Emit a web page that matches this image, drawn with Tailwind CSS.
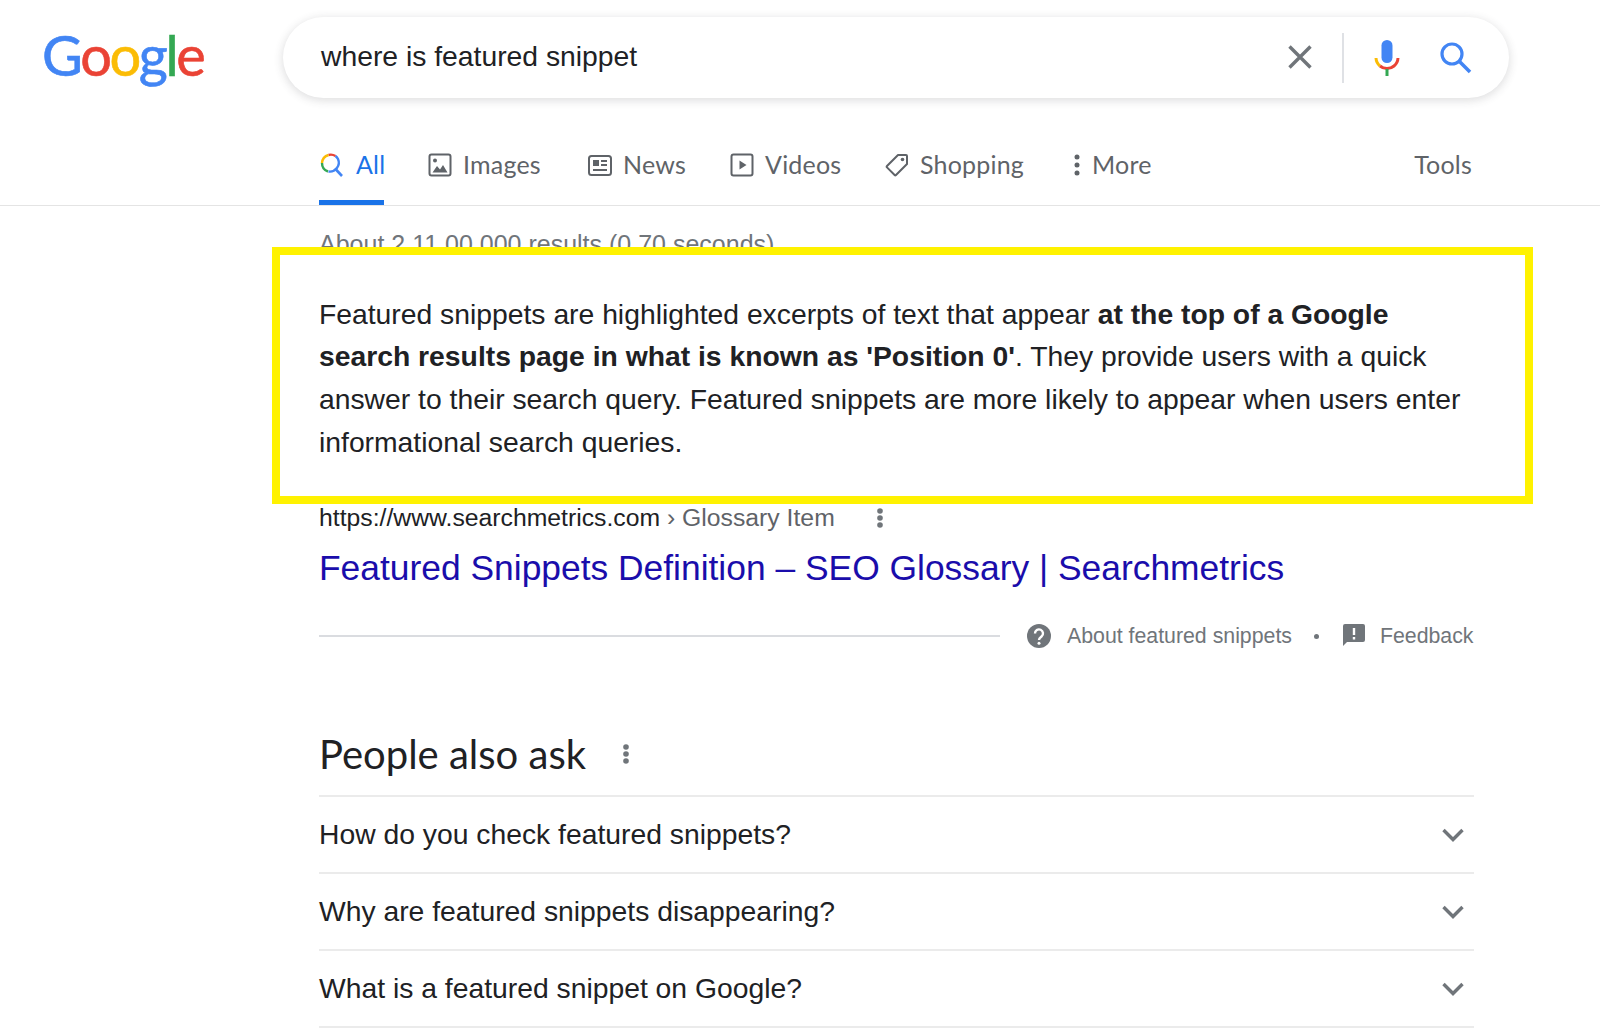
<!DOCTYPE html>
<html lang="en">
<head>
    <meta charset="UTF-8">
    <meta name="viewport" content="width=device-width, initial-scale=1.0">
    <title>where is featured snippet - Google Search</title>
    <script src="https://cdn.jsdelivr.net/npm/@tailwindcss/browser@4"></script>
</head>
<body class="bg-white w-[1600px] h-[1034px] overflow-hidden [font-family:'Liberation_Sans',sans-serif] text-[#202124]">

    <!-- header -->
    <header class="flex items-start h-[132px]">
        <div class="w-[283px] pl-[42px] pt-[17px] text-[56px] leading-[76px] tracking-[-2.400px] [-webkit-text-stroke:0.6px] [font-family:'Lato',sans-serif]">
            <span class="text-[#4285f4]">G</span><span class="text-[#ea4335]">o</span><span class="text-[#fbbc05]">o</span><span class="text-[#4285f4]">g</span><span class="text-[#34a853]">l</span><span class="text-[#ea4335]">e</span>
        </div>
        <div class="mt-[17px] w-[1226px] h-[81px] rounded-[41px] bg-white shadow-[0_2px_8px_1px_rgba(64,60,67,0.16)] flex items-center pl-[38px]">
            <span class="flex-1 mb-[2px] text-[28.300px] text-[#202124]">where is featured snippet</span>
            <svg class="w-[24px] h-[24px] mr-[30px] mb-[2px]" viewBox="0 0 24 24"><path d="M1.500 1.500 22.500 22.500M22.500 1.500 1.500 22.500" stroke="#70757a" stroke-width="3.400" fill="none"/></svg>
            <div class="w-[2px] h-[50px] bg-[#dfe1e5] mr-[30px]"></div>
            <svg class="w-[26px] h-[36px] mr-[40px]" viewBox="0 0 26 36">
                <rect x="7.500" y="0" width="11" height="23" rx="5.500" fill="#4285f4"/>
                <path d="M2 18a11 11 0 0 0 4 8" stroke="#fbbc05" stroke-width="3" fill="none"/>
                <path d="M6 26a11 11 0 0 0 14 0 11 11 0 0 0 4-8" stroke="#ea4335" stroke-width="3" fill="none"/>
                <rect x="11.500" y="29" width="3" height="7" fill="#34a853"/>
            </svg>
            <svg class="w-[32px] h-[32px] mr-[37px]" viewBox="0 0 32 32"><circle cx="12" cy="12" r="10" stroke="#4285f4" stroke-width="3.200" fill="none"/><path d="M19.500 19.500 30 30" stroke="#4285f4" stroke-width="3.600" fill="none"/></svg>
        </div>
    </header>

    <!-- tabs -->
    <nav class="h-[74px] border-b border-[#e4e4e4] pl-[319px] flex items-start text-[25px] tracking-[0.200px] text-[#5f6368] [font-family:'Lato',sans-serif]">
        <div class="flex items-center w-[1153px] h-[73px]">
            <a class="relative flex items-center gap-[12px] w-[109px] h-[73px] pb-[8px] text-[#1a73e8]">
                <svg class="w-[25px] h-[25px]" viewBox="0 0 25 25">
                    <path d="M16.500 4a9 9 0 0 0-7-1" stroke="#ea4335" stroke-width="2.400" fill="none"/>
                    <path d="M9.500 3a9 9 0 0 0-6.500 8" stroke="#fbbc05" stroke-width="2.400" fill="none"/>
                    <path d="M3 11a9 9 0 0 0 6 8.500" stroke="#34a853" stroke-width="2.400" fill="none"/>
                    <path d="M16.500 4a9 9 0 0 1 2.500 3 9 9 0 0 1-9.500 12.500" stroke="#4285f4" stroke-width="2.400" fill="none"/>
                    <path d="M16.500 17 23 24" stroke="#4285f4" stroke-width="2.600" fill="none"/>
                </svg>
                <span>All</span>
                <span class="absolute left-0 w-[65px] bottom-0 h-[5px] bg-[#1a73e8]"></span>
            </a>
            <a class="flex items-center gap-[11px] w-[160px] h-[73px] pb-[8px]">
                <svg class="w-[24px] h-[24px]" viewBox="0 0 24 24"><rect x="1.500" y="1.500" width="21" height="21" rx="2" stroke="#5f6368" stroke-width="2" fill="none"/><circle cx="7" cy="7.500" r="2" fill="#5f6368"/><path d="M4.500 19.500 9 13l3 3.500 3-4.500 4.500 7.500z" fill="#5f6368"/></svg>
                <span>Images</span>
            </a>
            <a class="flex items-center gap-[11px] w-[142px] h-[73px] pb-[8px]">
                <svg class="w-[24px] h-[24px]" viewBox="0 0 24 24"><rect x="1" y="3" width="22" height="19" rx="2.500" stroke="#5f6368" stroke-width="2" fill="none"/><rect x="5" y="7" width="6" height="6" fill="#5f6368"/><path d="M13 8h6M13 12h6M5 17h14" stroke="#5f6368" stroke-width="2" fill="none"/></svg>
                <span>News</span>
            </a>
            <a class="flex items-center gap-[11px] w-[155px] h-[73px] pb-[8px]">
                <svg class="w-[24px] h-[24px]" viewBox="0 0 24 24"><rect x="1.500" y="1.500" width="21" height="21" rx="2" stroke="#5f6368" stroke-width="2" fill="none"/><path d="M9.500 7.500v9l7-4.500z" fill="#5f6368"/></svg>
                <span>Videos</span>
            </a>
            <a class="flex items-center gap-[11px] w-[188px] h-[73px] pb-[8px]">
                <svg class="w-[24px] h-[24px]" viewBox="0 0 24 24"><path d="M13 2h8a1 1 0 0 1 1 1v8L11 22a1 1 0 0 1-1.400 0L2 14.400A1 1 0 0 1 2 13z" stroke="#5f6368" stroke-width="2" fill="none" stroke-linejoin="round"/><circle cx="17.500" cy="6.500" r="1.800" fill="#5f6368"/></svg>
                <span>Shopping</span>
            </a>
            <a class="flex items-center gap-[11px] h-[73px] pb-[8px]">
                <svg class="w-[8px] h-[24px]" viewBox="0 0 8 24"><circle cx="4" cy="4" r="2.500" fill="#5f6368"/><circle cx="4" cy="12" r="2.500" fill="#5f6368"/><circle cx="4" cy="20" r="2.500" fill="#5f6368"/></svg>
                <span>More</span>
            </a>
            <a class="ml-auto flex items-center h-[73px] pb-[8px]">Tools</a>
        </div>
    </nav>

    <!-- results -->
    <main class="ml-[319px] w-[1155px]">
        <div class="h-[41px] pt-[24px] text-[25px] leading-[28px] text-[#70757a] whitespace-nowrap">About 2,11,00,000 results (0.70 seconds)</div>

        <!-- highlighted snippet -->
        <div class="relative bg-white border-[8px] border-[#fff200] w-[1261px] h-[257px] ml-[-47px] pl-[39px] pt-[37.500px] text-[28.300px] leading-[42.800px] text-[#202124]">
            <p class="w-[1150px]">Featured snippets are highlighted excerpts of text that appear <b>at the top of a Google search results page in what is known as 'Position 0'</b>. They provide users with a quick answer to their search query. Featured snippets are more likely to appear when users enter informational search queries.</p>
        </div>

        <div class="flex items-center h-[28px] text-[24.750px] leading-[28px] whitespace-nowrap">
            <span>https://www.searchmetrics.com</span><span class="text-[#5f6368]">&nbsp;› Glossary Item</span>
            <svg class="ml-[42px] w-[6px] h-[22px]" viewBox="0 0 6 22"><circle cx="3" cy="4" r="2.800" fill="#70757a"/><circle cx="3" cy="11" r="2.800" fill="#70757a"/><circle cx="3" cy="18" r="2.800" fill="#70757a"/></svg>
        </div>
        <a class="block mt-[14px] text-[35.400px] leading-[44px] text-[#1a0dab] whitespace-nowrap">Featured Snippets Definition – SEO Glossary | Searchmetrics</a>

        <div class="flex items-center mt-[32px] h-[28px] text-[21.300px] text-[#70757a] whitespace-nowrap">
            <div class="shrink-0 w-[681px] h-[2px] bg-[#dadce0]"></div>
            <svg class="shrink-0 ml-[27px] w-[24px] h-[24px]" viewBox="0 0 24 24"><circle cx="12" cy="12" r="12" fill="#70757a"/><path d="M8 9.500a4 4 0 1 1 6.500 3c-1.500 1.200-2.500 1.700-2.500 3.500" stroke="#fff" stroke-width="2.400" fill="none"/><circle cx="12" cy="19.300" r="1.500" fill="#fff"/></svg>
            <span class="ml-[16px] pt-[2px]">About featured snippets</span>
            <span class="shrink-0 ml-[22px] w-[5px] h-[5px] rounded-full bg-[#70757a]"></span>
            <svg class="shrink-0 ml-[24px] mb-[2px] w-[22px] h-[22px]" viewBox="0 0 22 22"><path d="M2 0h18a2 2 0 0 1 2 2v14a2 2 0 0 1-2 2H4l-4 4V2a2 2 0 0 1 2-2z" fill="#70757a"/><path d="M11 4v7M11 13v2.500" stroke="#fff" stroke-width="2.400" fill="none"/></svg>
            <span class="ml-[15px] pt-[2px]">Feedback</span>
        </div>

        <div class="flex items-center mt-[81px] h-[46px]">
            <h2 class="text-[40px] leading-[46px] text-[#202124] [font-family:'Lato',sans-serif]">People also ask</h2>
            <svg class="ml-[37px] w-[6px] h-[22px]" viewBox="0 0 6 22"><circle cx="3" cy="4" r="2.800" fill="#70757a"/><circle cx="3" cy="11" r="2.800" fill="#70757a"/><circle cx="3" cy="18" r="2.800" fill="#70757a"/></svg>
        </div>

        <div class="mt-[18px] border-t-2 border-[#ebebeb] text-[28.300px]">
            <div class="flex items-center justify-between h-[77px] border-b-2 border-[#ebebeb] pr-[10px]">
                <span>How do you check featured snippets?</span>
                <svg class="w-[22px] h-[14px]" viewBox="0 0 22 14"><path d="M1.500 2 11 11.500 20.500 2" stroke="#70757a" stroke-width="3.400" fill="none"/></svg>
            </div>
            <div class="flex items-center justify-between h-[77px] border-b-2 border-[#ebebeb] pr-[10px]">
                <span>Why are featured snippets disappearing?</span>
                <svg class="w-[22px] h-[14px]" viewBox="0 0 22 14"><path d="M1.500 2 11 11.500 20.500 2" stroke="#70757a" stroke-width="3.400" fill="none"/></svg>
            </div>
            <div class="flex items-center justify-between h-[77px] border-b-2 border-[#ebebeb] pr-[10px]">
                <span>What is a featured snippet on Google?</span>
                <svg class="w-[22px] h-[14px]" viewBox="0 0 22 14"><path d="M1.500 2 11 11.500 20.500 2" stroke="#70757a" stroke-width="3.400" fill="none"/></svg>
            </div>
        </div>
    </main>

</body>
</html>
